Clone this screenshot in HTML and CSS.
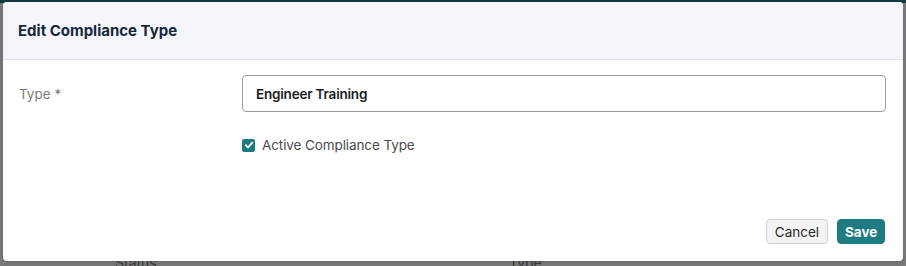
FILE: index.html
```html
<!DOCTYPE html>
<html>
<head>
<meta charset="utf-8">
<link rel="stylesheet" href="styles.css">
</head>
<body>
<div class="page">
  <div class="topbar"></div>
  <div class="bg-row">
    <span class="bg-status">Status</span>
    <span class="bg-type">Type</span>
  </div>
</div>
<div class="modal">
  <div class="modal-header">
    <h2 class="modal-title">Edit Compliance Type</h2>
  </div>
  <div class="modal-body">
    <div class="form-row">
      <label class="form-label">Type *</label>
      <div class="form-field">
        <input class="text-input" type="text" value="Engineer Training">
        <label class="check">
          <span class="check-box">
            <svg width="10" height="10" viewBox="0 0 10 10"><path d="M1.8 5.2 L4 7.3 L8.3 2.6" fill="none" stroke="#fff" stroke-width="1.8" stroke-linecap="round" stroke-linejoin="round"/></svg>
          </span>
          <span class="check-label">Active Compliance Type</span>
        </label>
      </div>
    </div>
  </div>
  <div class="modal-footer">
    <button class="btn btn-cancel">Cancel</button>
    <button class="btn btn-save">Save</button>
  </div>
</div>
</body>
</html>
```
FILE: styles.css
```css
* { box-sizing: border-box; }
html, body { margin: 0; padding: 0; }
body {
  width: 906px;
  height: 266px;
  overflow: hidden;
  background: #7c7c7c;
  font-family: Inter, "Noto Sans", sans-serif;
}
.page { position: relative; height: 266px; }
.topbar { height: 3px; background: #103c40; }
.bg-row {
  position: absolute;
  top: 254px;
  left: 0;
  width: 906px;
  font-size: 14px;
  color: #3a3a3a;
}
.bg-status { position: absolute; left: 115px; }
.bg-type { position: absolute; left: 509px; }

.modal {
  position: absolute;
  left: 3px;
  top: 2px;
  width: 900px;
  height: 259px;
  background: #fff;
  border-radius: 4px;
  display: flex;
  flex-direction: column;
  overflow: hidden;
  box-shadow: 0 2px 8px rgba(0,0,0,0.15);
}
.modal-header {
  height: 58px;
  background: #f3f5fb;
  border-bottom: 1px solid #e3e5ea;
  display: flex;
  align-items: center;
  padding: 0 15px;
}
.modal-title {
  margin: 0;
  font-size: 15px;
  font-weight: 700;
  color: #18283a;
  letter-spacing: 0;
}
.modal-body {
  flex: 1;
  padding: 15px 17px 0 16px;
}
.form-row {
  display: grid;
  grid-template-columns: 223px 1fr;
}
.form-label {
  font-size: 13.5px;
  color: #7a7a7a;
  padding-top: 11px;
}
.form-field {
  display: flex;
  flex-direction: column;
}
.text-input {
  height: 37px;
  width: 100%;
  border: 1px solid #9a9a9a;
  border-radius: 4px;
  padding: 0 13px;
  font-family: inherit;
  font-size: 13.5px;
  font-weight: 600;
  letter-spacing: -0.2px;
  color: #1b1b1b;
  outline: none;
}
.check {
  display: flex;
  align-items: center;
  margin-top: 25px;
  gap: 7px;
}
.check-box {
  width: 13px;
  height: 13px;
  border-radius: 2px;
  background: #1f7a80;
  display: flex;
  align-items: center;
  justify-content: center;
}
.check-label {
  font-size: 13.5px;
  color: #4a4a4a;
  letter-spacing: -0.1px;
}
.modal-footer {
  display: flex;
  justify-content: flex-end;
  gap: 9px;
  padding: 0 18px 17px 0;
}
.btn {
  height: 25px;
  border-radius: 4px;
  font-family: inherit;
  font-size: 13.5px;
  padding: 0 7px;
  cursor: pointer;
}
.btn-cancel {
  width: 62px;
  background: #f3f3f4;
  border: 1px solid #cfcfd2;
  color: #2a2a2a;
}
.btn-save {
  width: 48px;
  background: #1e7b82;
  border: 1px solid #1e7b82;
  color: #fff;
  font-weight: 700;
}
```
